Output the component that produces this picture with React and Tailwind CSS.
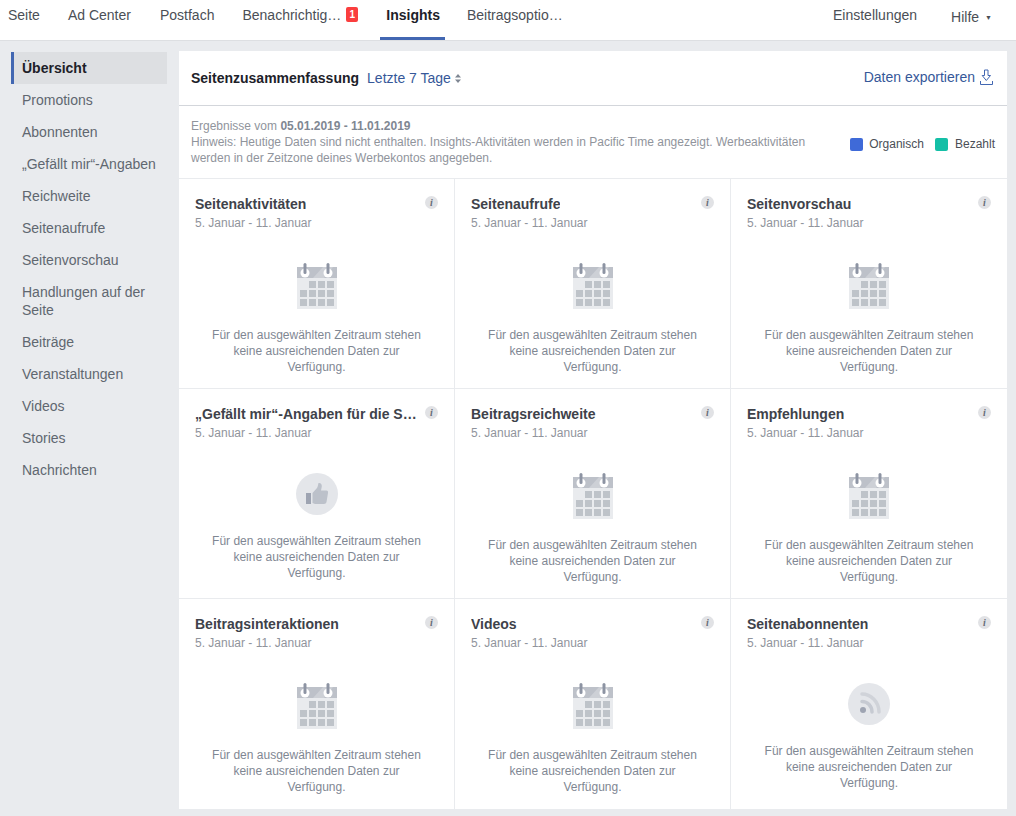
import React from "react";

const sideItems = [
  "Übersicht",
  "Promotions",
  "Abonnenten",
  "„Gefällt mir“-Angaben",
  "Reichweite",
  "Seitenaufrufe",
  "Seitenvorschau",
  "Handlungen auf der Seite",
  "Beiträge",
  "Veranstaltungen",
  "Videos",
  "Stories",
  "Nachrichten",
];

const cards = [
  { title: "Seitenaktivitäten", icon: "cal" },
  { title: "Seitenaufrufe", icon: "cal" },
  { title: "Seitenvorschau", icon: "cal" },
  { title: "„Gefällt mir“-Angaben für die Seite", icon: "like" },
  { title: "Beitragsreichweite", icon: "cal" },
  { title: "Empfehlungen", icon: "cal" },
  { title: "Beitragsinteraktionen", icon: "cal" },
  { title: "Videos", icon: "cal" },
  { title: "Seitenabonnenten", icon: "rss" },
];

function CalendarIcon() {
  return (
    <svg width="42" height="46" viewBox="0 0 42 46" className="block">
      <rect x="1" y="4" width="40" height="42" fill="#e9ebee" />
      <rect x="1" y="4" width="40" height="11" fill="#bdc1c9" />
      <path d="M17 15 L27 4 H37 L28 15 Z" fill="#cdd0d6" />
      <circle cx="9" cy="10" r="4.5" fill="#fff" />
      <circle cx="32" cy="10" r="4.5" fill="#fff" />
      <rect x="7.5" y="0" width="3" height="11" rx="1.5" fill="#8d94a3" />
      <rect x="30.5" y="0" width="3" height="11" rx="1.5" fill="#8d94a3" />
      {[
        [13, 18], [22, 18], [31, 18],
        [4, 27], [13, 27], [22, 27], [31, 27],
        [4, 36], [13, 36], [22, 36], [31, 36],
      ].map(([x, y]) => (
        <rect key={x + "-" + y} x={x} y={y} width="7" height="7" fill="#bec3c9" />
      ))}
    </svg>
  );
}

function LikeIcon() {
  return (
    <svg width="42" height="42" viewBox="0 0 42 42" className="block">
      <circle cx="21" cy="21" r="21" fill="#e4e6ea" />
      <rect x="10" y="20" width="5" height="11" fill="#9ea4b2" />
      <path d="M16.5 20 L21 15 C22 13.5 22 11.5 22.5 10 C24.5 9.5 26 11 25.8 13.5 L25 17.5 H30.5 C31.8 17.5 32.3 18.6 32 20 L30.5 29 C30.2 30.3 29.4 31 28 31 H19 L16.5 30 Z" fill="#bcc1ca" />
    </svg>
  );
}

function RssIcon() {
  return (
    <svg width="42" height="42" viewBox="0 0 42 42" className="block">
      <circle cx="21" cy="21" r="21" fill="#e4e6ea" />
      <path d="M14 11 C23 11 31 19 31 29" fill="none" stroke="#d0d3d9" strokeWidth="3.5" strokeLinecap="round" />
      <path d="M14 18.5 C19.5 18.5 24 23 24 29" fill="none" stroke="#c6cad2" strokeWidth="3.5" strokeLinecap="round" />
      <circle cx="15" cy="27" r="3" fill="#9ea4b2" />
    </svg>
  );
}

function InfoDot() {
  return (
    <span className="flex h-[13px] w-[13px] shrink-0 items-center justify-center rounded-full bg-[#e1e2e5] font-['Liberation_Serif',serif] text-[10px] font-bold italic leading-none text-[#666c78]">
      i
    </span>
  );
}

function Card({ title, icon, index }) {
  const lastCol = index % 3 === 2;
  const lastRow = index >= 6;
  return (
    <div
      className={
        "flex flex-col px-4 pt-[15px] " +
        (lastCol ? "" : "border-r border-[#e9ebee] ") +
        (lastRow ? "h-[210px]" : "h-[210px] border-b border-[#e9ebee]")
      }
    >
      <div className="flex items-start justify-between">
        <div className="min-w-0 truncate text-[14px] font-bold leading-[20px] text-[#3e424a]">
          {title}
        </div>
        <div className="mt-[2px] ml-2">
          <InfoDot />
        </div>
      </div>
      <div className="mt-[1px] text-[12px] leading-[16px] text-[#90949c]">5. Januar - 11. Januar</div>
      <div className="mt-[32px] flex justify-center">
        {icon === "cal" && <CalendarIcon />}
        {icon === "like" && <LikeIcon />}
        {icon === "rss" && <RssIcon />}
      </div>
      <p className="mt-[18px] px-3 text-center text-[12px] leading-[16px] text-[#7f8793]">
        Für den ausgewählten Zeitraum stehen keine ausreichenden Daten zur Verfügung.
      </p>
    </div>
  );
}

export default function App() {
  return (
    <div className="min-h-[816px] bg-[#e9ebee] font-['Liberation_Sans',Arial,sans-serif]">
      {/* Top nav */}
      <header className="flex h-[41px] items-start justify-between border-b border-[#dddfe2] bg-white text-[14px] text-[#4b4f56]">
        <nav className="flex">
          <a className="pl-[8px] pr-[10px] leading-[31px]">Seite</a>
          <a className="px-[10px] ml-[8px] leading-[31px]">Ad Center</a>
          <a className="px-[10px] ml-[9px] leading-[31px]">Postfach</a>
          <a className="ml-[8px] flex items-start px-[10px] leading-[31px]">
            Benachrichtig…
            <span className="mt-[7px] ml-[5px] flex h-[15px] w-[12px] items-center justify-center rounded-[2px] bg-[#fa3e3e] text-[10px] font-bold leading-none text-white">
              1
            </span>
          </a>
          <a className="ml-[12px] h-[40px] border-b-[3px] border-[#4267b2] pl-[6px] pr-[5px] font-bold leading-[31px] text-[#1d2129]">
            Insights
          </a>
          <a className="ml-[22px] leading-[31px]">Beitragsoptio…</a>
        </nav>
        <div className="flex">
          <a className="leading-[31px]">Einstellungen</a>
          <a className="ml-[34px] mr-[24px] flex items-center gap-[6px] leading-[34px]">
            Hilfe
            <span className="mt-[1px] text-[7px] leading-none">▼</span>
          </a>
        </div>
      </header>

      <div className="flex items-start pt-[10px]">
        {/* Sidebar */}
        <aside className="ml-[11px] mt-[1px] w-[156px] shrink-0 text-[14px] leading-[18px] text-[#606770]">
          {sideItems.map((item, i) => (
            <div
              key={item}
              className={
                i === 0
                  ? "flex h-[32px] items-center border-l-[3px] border-[#4267b2] bg-[#dddfe2] pl-[8px] font-bold text-[#1d2129]"
                  : "py-[7px] pl-[11px] " + (item.length > 22 ? "pr-2" : "")
              }
            >
              {item}
            </div>
          ))}
        </aside>

        {/* Main */}
        <main className="ml-[12px] w-[828px] bg-white">
          <div className="flex h-[55px] items-center justify-between border-b border-[#d3d6db] pl-3 pr-[14px]">
            <div className="flex items-center">
              <span className="text-[14px] font-bold text-[#1d2129]">Seitenzusammenfassung</span>
              <span className="ml-[8px] text-[14px] text-[#365899]">Letzte 7 Tage</span>
              <svg width="6" height="9" viewBox="0 0 6 9" className="ml-[4px]">
                <path d="M3 0 L6 3.5 H0 Z M3 9 L0 5.5 H6 Z" fill="#7f8793" />
              </svg>
            </div>
            <div className="mb-[2px] flex items-center text-[14px] text-[#365899]">
              Daten exportieren
              <svg width="13" height="17" viewBox="0 0 13 17" fill="none" stroke="#4267b2" className="ml-[5px]">
                <path d="M4.5 1 H8 V6.5 H10.5 L6.3 11.5 L2.2 6.5 H4.5 Z" />
                <path d="M0.5 12 V15.5 H12.5 V12" />
              </svg>
            </div>
          </div>

          <div className="flex h-[73px] items-start justify-between border-b border-[#e9ebee] pl-3 pr-3 pt-[12px]">
            <div className="w-[630px] text-[12px] leading-[16px] text-[#90949c]">
              <div>
                Ergebnisse vom <b className="text-[#7f8793]">05.01.2019 - 11.01.2019</b>
              </div>
              <div>
                Hinweis: Heutige Daten sind nicht enthalten. Insights-Aktivitäten werden in Pacific Time angezeigt. Werbeaktivitäten werden in der Zeitzone deines Werbekontos angegeben.
              </div>
            </div>
            <div className="mt-[17px] flex items-center text-[12px] text-[#4b4f56]">
              <span className="h-[13px] w-[13px] rounded-[2px] bg-[#3f6ad8]" />
              <span className="ml-[6px]">Organisch</span>
              <span className="ml-[11px] h-[13px] w-[13px] rounded-[2px] bg-[#14bfa6]" />
              <span className="ml-[7px]">Bezahlt</span>
            </div>
          </div>

          <div className="grid grid-cols-[276px_276px_276px]">
            {cards.map((c, i) => (
              <Card key={c.title} title={c.title} icon={c.icon} index={i} />
            ))}
          </div>
        </main>
      </div>
    </div>
  );
}
